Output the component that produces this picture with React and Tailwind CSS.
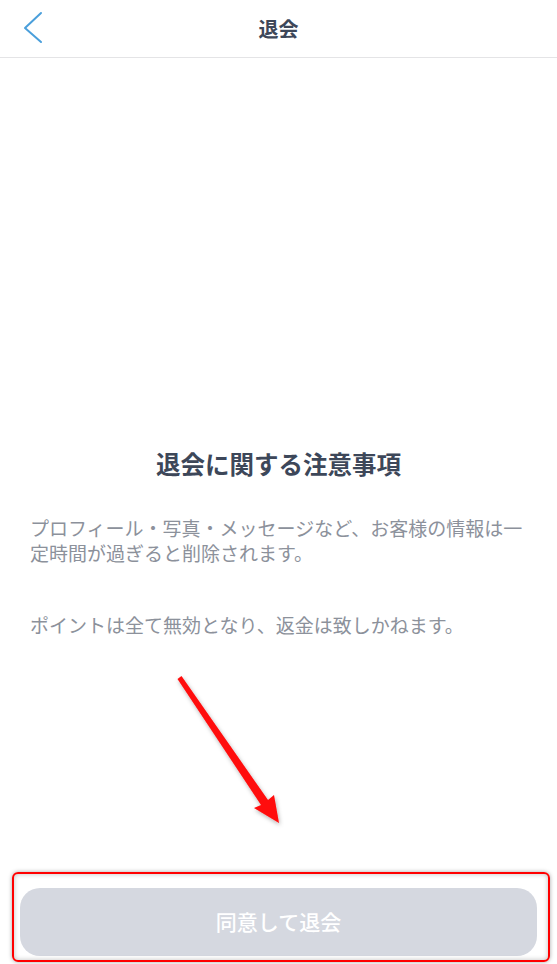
const font = { fontFamily: '"Noto Sans CJK JP", "Noto Sans", sans-serif' };

const notes = [
  "プロフィール・写真・メッセージなど、お客様の情報は一定時間が過ぎると削除されます。",
  "ポイントは全て無効となり、返金は致しかねます。",
];

const Header = () => (
  <header className="relative h-[58px] flex items-center justify-center border-b border-[#e4e4e6] bg-white">
    <button className="absolute left-[22px] top-[11px] text-[#4a9fdb]">
      <svg width="22" height="34" viewBox="0 0 22 34" fill="none">
        <polyline points="19,2 3,17 19,31" stroke="currentColor" strokeWidth="2" strokeLinecap="round" strokeLinejoin="round" />
      </svg>
    </button>
    <h1 className="text-[20px] font-bold text-[#3d4759] leading-none">退会</h1>
  </header>
);

// red annotation arrow drawn over the screenshot
const Arrow = () => (
  <svg className="absolute left-0 top-0 pointer-events-none" width="557" height="964">
    <defs>
      <filter id="sh" x="-20%" y="-20%" width="140%" height="140%">
        <feDropShadow dx="1" dy="2" stdDeviation="2" floodColor="#000" floodOpacity="0.3" />
      </filter>
    </defs>
    <polygon
      points="177.5,679 181.5,676 268,800 274,795 279,823 254,808 261,805"
      fill="#ff0a0a"
      filter="url(#sh)"
    />
  </svg>
);

export default function App() {
  return (
    <div className="relative w-[557px] h-[964px] bg-white flex flex-col overflow-hidden" style={font}>
      <Header />

      <main className="flex-1 flex flex-col pt-[389px] px-[30px]">
        <h2 className="text-center text-[24.5px] font-bold text-[#3d4759] leading-[34px] mb-[34px]">
          退会に関する注意事項
        </h2>
        <div className="flex flex-col gap-[47px]">
          {notes.map((n) => (
            <p key={n} className="text-[19px] leading-[25px] text-[#8c919b] pr-[2px]">
              {n}
            </p>
          ))}
        </div>
      </main>

      <footer className="relative px-[20px] pt-[16px] pb-[8px]">
        <button className="w-full h-[68px] rounded-[20px] bg-[#d5d8e0] text-white text-[21px] font-medium">
          同意して退会
        </button>
        <div className="absolute left-[12px] right-[7px] top-0 bottom-[2px] rounded-[6px] border-2 border-[#ff0000] shadow-[0_0_4px_rgba(0,0,0,0.35),inset_0_0_5px_rgba(0,0,0,0.25)] pointer-events-none" />
      </footer>

      <Arrow />
    </div>
  );
}
